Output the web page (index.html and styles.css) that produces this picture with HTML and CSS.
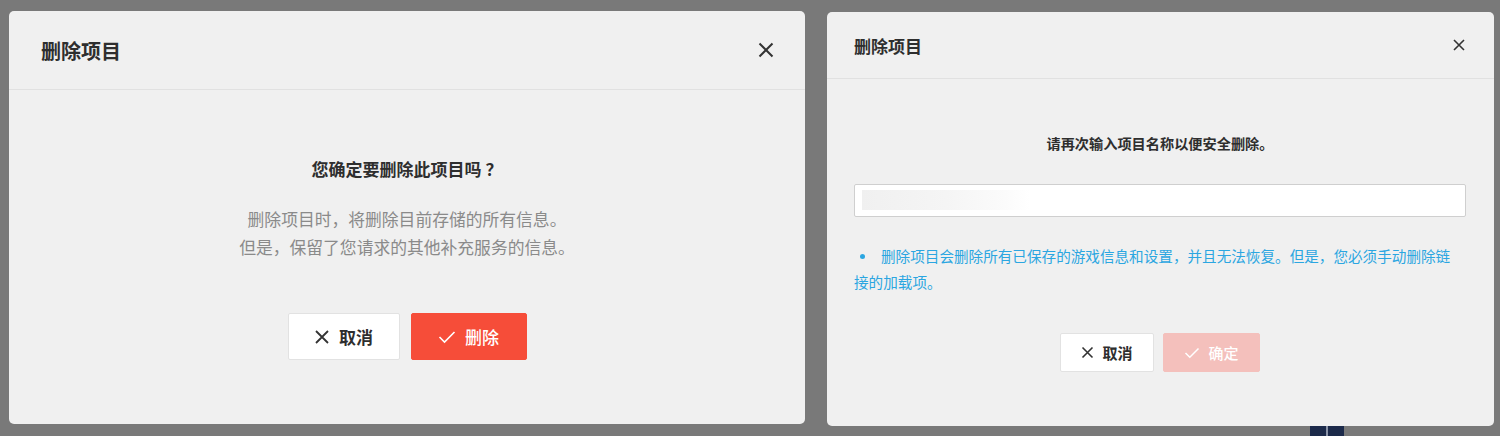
FILE: index.html
```html
<!DOCTYPE html>
<html lang="zh-CN">
<head>
<meta charset="utf-8">
<title>删除项目</title>
<link rel="stylesheet" href="styles.css">
</head>
<body>
<div class="page">
  <section class="panel panel-left">
    <div class="dialog dialog-lg">
      <header class="dlg-head">
        <h2 class="dlg-title">删除项目</h2>
        <svg class="close" width="16" height="16" viewBox="0 0 16 16"><path d="M1.5 1.5L14.5 14.5M14.5 1.5L1.5 14.5" stroke="#333" stroke-width="2" fill="none"/></svg>
      </header>
      <div class="dlg-body">
        <p class="question">您确定要删除此项目吗 ？</p>
        <p class="desc">删除项目时，将删除目前存储的所有信息。<br>但是，保留了您请求的其他补充服务的信息。</p>
        <div class="actions">
          <button class="btn btn-cancel">
            <svg width="16" height="16" viewBox="0 0 16 16"><path d="M2 2L14 14M14 2L2 14" stroke="#333" stroke-width="1.8" fill="none"/></svg>
            <span>取消</span>
          </button>
          <button class="btn btn-danger">
            <svg width="18" height="14" viewBox="0 0 18 14"><path d="M1.5 7L6.5 12L16.5 2" stroke="#fff" stroke-width="1.6" fill="none"/></svg>
            <span>删除</span>
          </button>
        </div>
      </div>
    </div>
  </section>
  <section class="panel panel-right">
    <div class="dialog dialog-sm">
      <header class="dlg-head">
        <h2 class="dlg-title">删除项目</h2>
        <svg class="close" width="12" height="12" viewBox="0 0 12 12"><path d="M1 1L11 11M11 1L1 11" stroke="#333" stroke-width="1.6" fill="none"/></svg>
      </header>
      <div class="dlg-body">
        <p class="question">请再次输入项目名称以便安全删除。</p>
        <div class="input"><div class="ghost"></div></div>
        <p class="note"><span class="dot"></span>删除项目会删除所有已保存的游戏信息和设置，并且无法恢复。但是，您必须手动删除链接的加载项。</p>
        <div class="actions">
          <button class="btn btn-cancel">
            <svg width="13" height="13" viewBox="0 0 13 13"><path d="M1.5 1.5L11.5 11.5M11.5 1.5L1.5 11.5" stroke="#333" stroke-width="1.6" fill="none"/></svg>
            <span>取消</span>
          </button>
          <button class="btn btn-disabled">
            <svg width="16" height="12" viewBox="0 0 16 12"><path d="M1.5 6L5.8 10.3L14.5 1.5" stroke="#fff" stroke-width="1.5" fill="none"/></svg>
            <span>确定</span>
          </button>
        </div>
      </div>
    </div>
    <div class="bg-deco"><div class="navy"></div></div>
  </section>
</div>
</body>
</html>
```

FILE: styles.css
```css
* { box-sizing: border-box; }
html, body { margin: 0; padding: 0; }
body {
  width: 1500px;
  height: 436px;
  overflow: hidden;
  background: #797979;
  font-family: "Noto Sans CJK SC", "Noto Sans", sans-serif;
}
.page {
  display: flex;
  height: 436px;
}
.panel {
  background: #797979;
  height: 436px;
  display: flex;
  flex-direction: column;
}
.panel-left {
  width: 815px;
  padding: 11px 10px 0 9px;
}
.panel-right {
  flex: 1;
  padding: 12px 6px 0 12px;
}
.dialog {
  background: #f0f0f0;
  border-radius: 5px;
  display: flex;
  flex-direction: column;
}
.dialog-lg { height: 413px; }
.dialog-sm { height: 414px; }

.dlg-head {
  display: flex;
  align-items: center;
  justify-content: space-between;
  border-bottom: 1px solid #e1e1e1;
}
.dialog-lg .dlg-head { height: 79px; padding: 0 31px 0 32px; }
.dialog-sm .dlg-head { height: 67px; padding: 0 29px 0 27px; }
.dlg-title {
  margin: 0;
  color: #2e2e2e;
  font-weight: 700;
}
.dialog-lg .dlg-title { font-size: 20px; }
.dialog-sm .dlg-title { font-size: 17px; }
.close { display: block; }

.dlg-body {
  display: flex;
  flex-direction: column;
  align-items: center;
}
.dialog-lg .dlg-body { padding-top: 67px; }
.dialog-sm .dlg-body { padding: 54px 28px 0 27px; align-items: stretch; }

.question {
  margin: 0;
  color: #2e2e2e;
  font-weight: 700;
  text-align: center;
}
.dialog-lg .question { font-size: 17px; line-height: 24px; }
.dialog-sm .question { font-size: 14.2px; line-height: 20px; }

.desc {
  margin: 24px 0 0;
  color: #8a8a8a;
  font-size: 16.8px;
  line-height: 28px;
  text-align: center;
}

.actions {
  display: flex;
  justify-content: center;
}
.dialog-lg .actions { margin-top: 52px; gap: 11px; }
.dialog-sm .actions { margin-top: 38px; gap: 9px; }

.btn {
  display: flex;
  align-items: center;
  justify-content: center;
  border-radius: 2px;
  font-family: inherit;
  font-weight: 700;
  padding: 0;
  cursor: pointer;
}
.dialog-lg .btn { height: 47px; font-size: 17px; gap: 9px; }
.dialog-lg .btn-cancel { width: 112px; }
.dialog-lg .btn-danger { width: 116px; }
.dialog-sm .btn { height: 39px; font-size: 15px; gap: 8px; }
.dialog-sm .btn-cancel { width: 94px; }
.dialog-sm .btn-disabled { width: 97px; }

.btn-cancel {
  background: #ffffff;
  border: 1px solid #e2e2e2;
  color: #2e2e2e;
}
.btn-danger {
  background: #f64d39;
  border: 1px solid #f64d39;
  color: #ffffff;
  font-weight: 500;
}
.btn-disabled {
  background: #f4c0bc;
  border: 1px solid #f4c0bc;
  color: #ffffff;
  font-weight: 500;
}

.input {
  margin-top: 31px;
  height: 33px;
  background: #ffffff;
  border: 1px solid #cfcfcf;
  border-radius: 2px;
  padding: 5px 7px;
}
.ghost {
  width: 168px;
  height: 20px;
  background: linear-gradient(90deg, #f0f0f0 0%, #f5f5f5 50%, #fbfbfb 85%, #ffffff 100%);
}

.note {
  margin: 26px 0 0;
  padding-right: 12px;
  color: #2ba6e1;
  font-size: 14.6px;
  line-height: 26px;
}
.dot {
  display: inline-block;
  width: 5px;
  height: 5px;
  border-radius: 50%;
  background: #2ba6e1;
  vertical-align: middle;
  margin: 0 16px 3px 6px;
}

.bg-deco {
  flex: 1;
  display: flex;
  padding-left: 483px;
}
.navy {
  width: 34px;
  background: linear-gradient(90deg, #1c2a4a 0 16px, #8a93a8 16px 18px, #1c2a4a 18px);
}
```
